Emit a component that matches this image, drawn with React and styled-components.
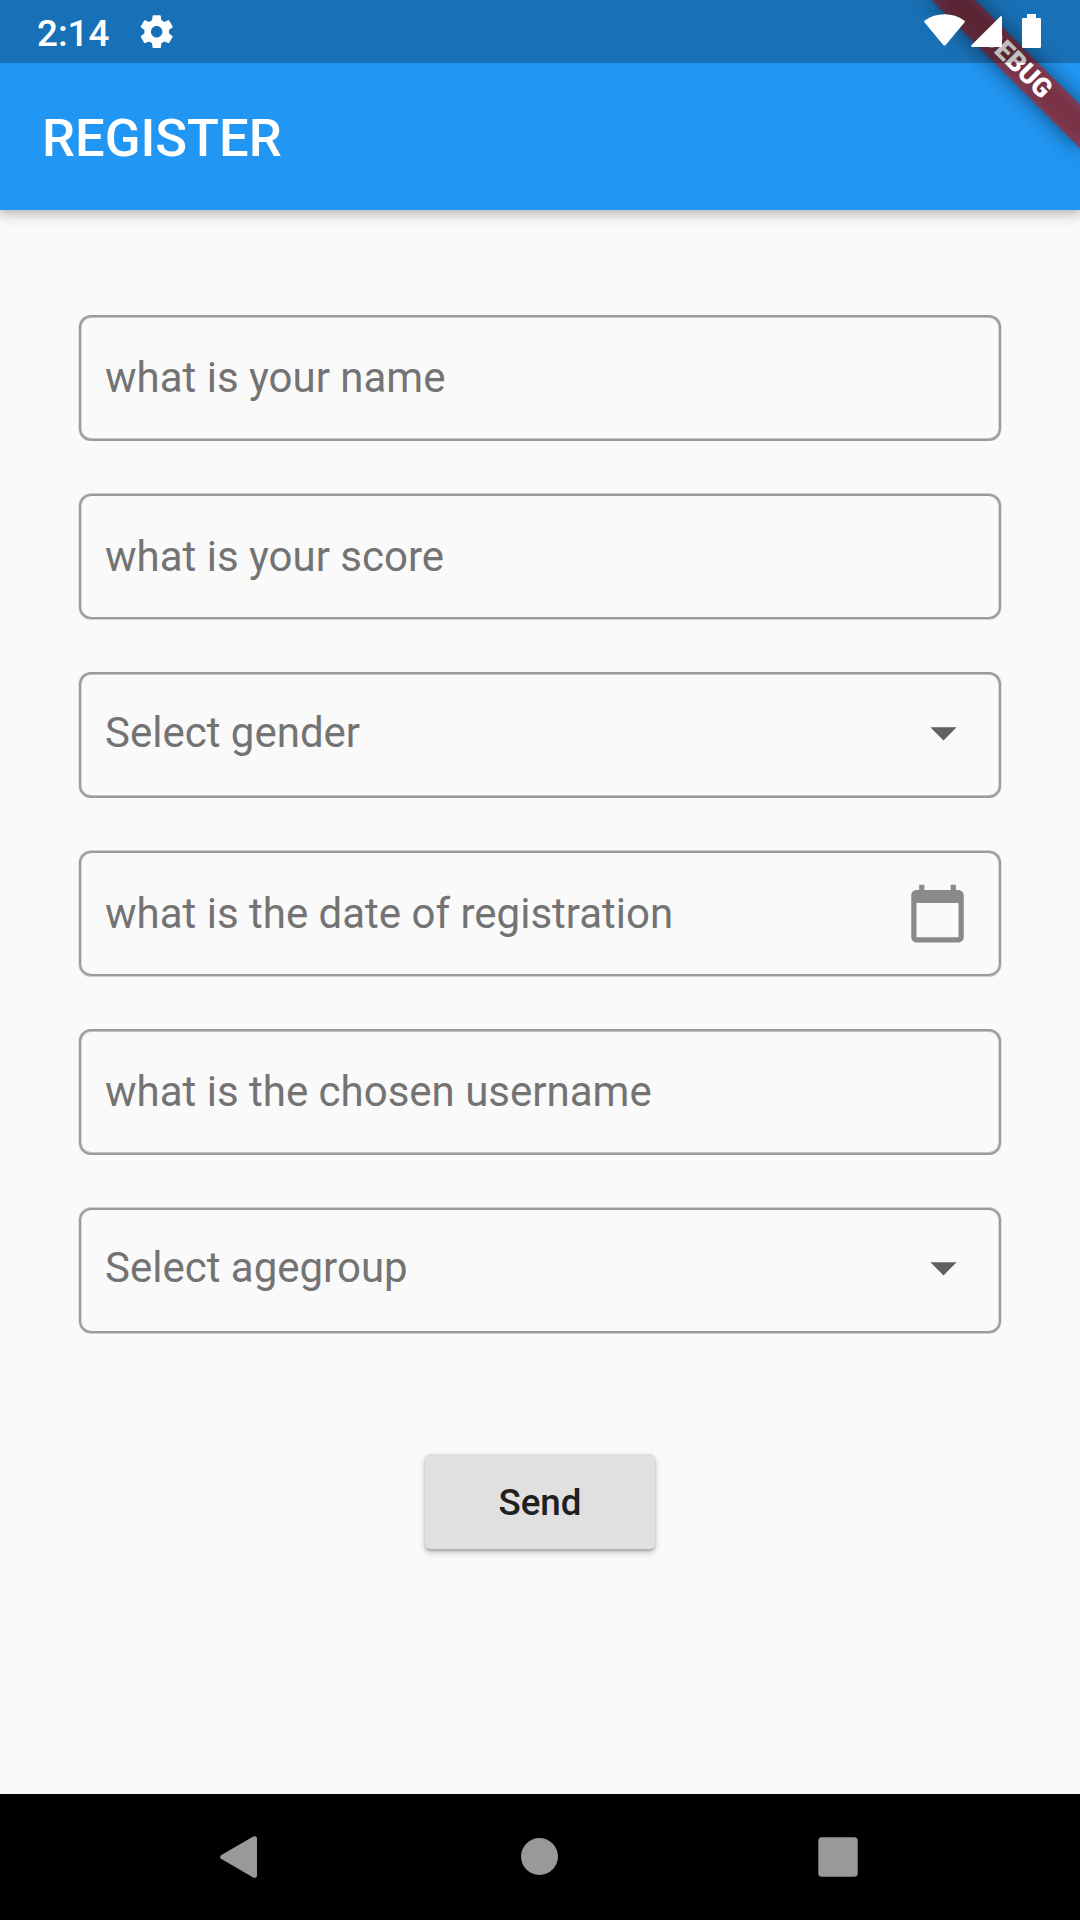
import React from "react";
import styled, { createGlobalStyle, css } from "styled-components";

const GlobalStyle = createGlobalStyle`
  *, *::before, *::after { box-sizing: border-box; }
  html, body { margin: 0; padding: 0; background: #fafafa; }
  body { font-family: Roboto, "Noto Sans", sans-serif; }
`;

const Screen = styled.div`
  position: relative;
  width: 1080px;
  height: 1920px;
  overflow: hidden;
  display: flex;
  flex-direction: column;
  background: #fafafa;
`;

const Header = styled.header`
  background: #2196f3;
  flex: none;
  box-shadow: 0 3px 8px 1px rgba(0, 0, 0, 0.14), 0 5px 14px 1px rgba(0, 0, 0, 0.13);
`;

const StatusBar = styled.div`
  position: relative;
  z-index: 2;
  height: 63px;
  padding: 0 39px 0 37px;
  display: flex;
  align-items: flex-start;
  background: rgba(0, 0, 0, 0.25);
  color: #fff;
`;

const Clock = styled.span`
  font-size: 36.75px;
  font-weight: 500;
  line-height: 43px;
  margin-top: 12px;
  width: 100px;
`;

const StatusIcons = styled.div`
  margin-left: auto;
  display: flex;
`;

const Toolbar = styled.div`
  height: 147px;
  padding: 44px 42px 0;
`;

const Title = styled.h1`
  margin: 0;
  font-size: 52.5px;
  font-weight: 500;
  line-height: 62px;
  color: #fff;
`;

const BannerLayer = styled.div`
  position: absolute;
  z-index: 1;
  top: 0;
  left: 1080px;
  width: 0;
  height: 0;
  transform: rotate(45deg);
  transform-origin: 0 0;
`;

const bannerRect = css`
  position: absolute;
  left: -105px;
  top: 73.5px;
  width: 210px;
  height: 31.5px;
`;

const BannerShadow = styled.div`
  ${bannerRect}
  background: rgba(0, 0, 0, 0.5);
  filter: blur(10.4px);
`;

const Banner = styled.div`
  ${bannerRect}
  padding-left: 1.2px;
  background: rgba(183, 28, 28, 0.627);
  color: #fff;
  font-size: 26.775px;
  font-weight: 900;
  line-height: 30px;
  text-align: center;
`;

const Form = styled.main`
  flex: 1;
  padding: 105px 79px 0;
  display: flex;
  flex-direction: column;
  align-items: center;
  gap: 53px;
`;

const tall = css`
  height: 126px;
  box-shadow: inset 0 1px rgba(0, 0, 0, 0.22), inset 0 -1px rgba(0, 0, 0, 0.22),
    inset 1px 0 rgba(0, 0, 0, 0.13), inset -1px 0 rgba(0, 0, 0, 0.13),
    1px 0 rgba(0, 0, 0, 0.09), -1px 0 rgba(0, 0, 0, 0.09);
`;

const short = css`
  height: 125px;
  box-shadow: 0 1px rgba(0, 0, 0, 0.18), 0 -1px rgba(0, 0, 0, 0.18),
    inset 1px 0 rgba(0, 0, 0, 0.13), inset -1px 0 rgba(0, 0, 0, 0.13),
    1px 0 rgba(0, 0, 0, 0.09), -1px 0 rgba(0, 0, 0, 0.09);
`;

const Field = styled.div`
  width: 922px;
  flex: none;
  display: flex;
  justify-content: space-between;
  align-items: flex-start;
  border: 2px solid #9b9b9b;
  border-radius: 12px;
  padding-left: 24px;
  padding-right: ${(p) => p.$end || 24}px;
  ${(p) => (p.$short ? short : tall)}
`;

const Hint = styled.span`
  margin-top: ${(p) => p.$top}px;
  font-size: 42px;
  line-height: 49px;
  color: #737373;
  white-space: nowrap;
`;

const Glyph = styled.svg`
  display: block;
  flex: none;
  width: ${(p) => p.$w}px;
  height: ${(p) => p.$h || p.$w}px;
  margin-top: ${(p) => p.$top || 0}px;
  margin-left: ${(p) => p.$left || 0}px;
  fill: ${(p) => p.$color || "#fff"};
`;

const SendButton = styled.button`
  margin-top: 68px;
  width: 230px;
  height: 95px;
  flex: none;
  border: 0;
  padding: 2px 0 0;
  border-radius: 5px;
  background: #e0e0e0;
  color: #202020;
  font: 500 36.75px/43px Roboto, sans-serif;
  box-shadow: 0 2px 3px rgba(0, 0, 0, 0.22), 0 4px 7px rgba(0, 0, 0, 0.18);
`;

const NavBar = styled.nav`
  height: 126px;
  flex: none;
  background: #000;
  display: flex;
  align-items: flex-start;
`;

const FIELDS = [
  { label: "what is your name" },
  { label: "what is your score" },
  { label: "Select gender", kind: "select" },
  { label: "what is the date of registration", kind: "date" },
  { label: "what is the chosen username" },
  { label: "Select agegroup", kind: "select" },
];

function FormField({ label, kind, index }) {
  const isShort = index % 2 === 1;
  const isSelect = kind === "select";
  const hintTop = isSelect ? (isShort ? 33 : 34) : 36;
  return (
    <Field $short={isShort} $end={kind === "date" ? 30 : 24}>
      <Hint $top={hintTop}>{label}</Hint>
      {isSelect && (
        <Glyph $w={63} $top={isShort ? 26 : 27} $color="#616161" viewBox="0 0 24 24">
          <path d="M7 10l5 5 5-5z" />
        </Glyph>
      )}
      {kind === "date" && (
        <Glyph $w={63} $top={29} $color="#8a8a8a" viewBox="0 0 24 24">
          <path d="M20 3h-1V1h-2v2H7V1H5v2H4c-1.1 0-2 .9-2 2v16c0 1.1.9 2 2 2h16c1.1 0 2-.9 2-2V5c0-1.1-.9-2-2-2zm0 18H4V8h16v13z" />
        </Glyph>
      )}
    </Field>
  );
}

export default function App() {
  return (
    <>
      <GlobalStyle />
      <Screen>
        <Header>
          <StatusBar>
            <Clock>2:14</Clock>
            <Glyph $w={39.4} $top={12} viewBox="0 0 24 24">
              <path d="M19.43 12.98c.04-.32.07-.64.07-.98s-.03-.66-.07-.98l2.11-1.65c.19-.15.24-.42.12-.64l-2-3.46c-.12-.22-.39-.3-.61-.22l-2.49 1c-.52-.4-1.08-.73-1.69-.98l-.38-2.65C14.46 2.18 14.25 2 14 2h-4c-.25 0-.46.18-.49.42l-.38 2.65c-.61.25-1.17.59-1.69.98l-2.49-1c-.23-.09-.49 0-.61.22l-2 3.46c-.13.22-.07.49.12.64l2.11 1.65c-.04.32-.07.65-.07.98s.03.66.07.98l-2.11 1.65c-.19.15-.24.42-.12.64l2 3.46c.12.22.39.3.61.22l2.49-1c.52.4 1.08.73 1.69.98l.38 2.65c.03.24.24.42.49.42h4c.25 0 .46-.18.49-.42l.38-2.65c.61-.25 1.17-.59 1.69-.98l2.49 1c.23.09.49 0 .61-.22l2-3.46c.12-.22.07-.49-.12-.64l-2.11-1.65zM12 15.5c-1.93 0-3.5-1.57-3.5-3.5s1.57-3.5 3.5-3.5 3.5 1.57 3.5 3.5-1.57 3.5-3.5 3.5z" />
            </Glyph>
            <StatusIcons>
              <Glyph $w={41} $h={32} $top={14} viewBox="0 0 41 32">
                <path d="M.6 8.6C-.1 7.8 0 7 .8 6.5C6.5 2.3 13.2.2 20.5.2S34.5 2.3 40.2 6.5C41 7 41.1 7.8 40.4 8.6L21.7 30.9C21 31.7 20 31.7 19.3 30.9Z" />
              </Glyph>
              <Glyph $w={31} $h={31} $top={16} $left={6} viewBox="0 0 31 31">
                <path d="M29.3.4C30.1-.3 31 .1 31 1.100V31H1.1C0 31 -.3 30 .4 29.3Z" />
              </Glyph>
              <Glyph $w={19} $h={34} $top={14} $left={20} viewBox="0 0 19 34">
                <path d="M5 0h9v4h3.700Q19 4 19 5.300v27.200Q19 34 17.700 34H1.300Q0 34 0 32.700V5.300Q0 4 1.300 4H5z" />
              </Glyph>
            </StatusIcons>
          </StatusBar>
          <Toolbar>
            <Title>REGISTER</Title>
          </Toolbar>
        </Header>
        <BannerLayer>
          <BannerShadow />
          <Banner>DEBUG</Banner>
        </BannerLayer>
        <Form>
          {FIELDS.map((field, index) => (
            <FormField key={field.label} index={index} {...field} />
          ))}
          <SendButton>Send</SendButton>
        </Form>
        <NavBar>
          <Glyph $w={37} $h={42} $top={42} $left={220} $color="#999" viewBox="0 0 37 42">
            <path d="M1 19.2L33.2.5Q37-.8 37 3V39Q37 42.8 33.2 41.5L1 22.8Q-.8 21 1 19.2Z" />
          </Glyph>
          <Glyph $w={37} $top={44} $left={264} $color="#999" viewBox="0 0 37 37">
            <circle cx="18.5" cy="18.5" r="18.5" />
          </Glyph>
          <Glyph $w={40} $top={43} $left={260} $color="#999" viewBox="0 0 40 40">
            <rect x=".3" y=".3" width="39.4" height="39.4" rx="3.5" />
          </Glyph>
        </NavBar>
      </Screen>
    </>
  );
}
